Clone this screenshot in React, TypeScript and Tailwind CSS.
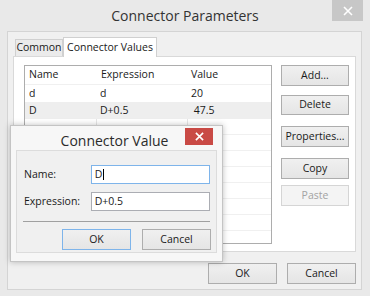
const rows = [
  { name: "d", expr: "d", value: "20" },
  { name: "D", expr: "D+0.5", value: "\u00a047.5" },
];

function Btn({
  label,
  className = "",
  disabled = false,
  primary = false,
}: {
  label: string;
  className?: string;
  disabled?: boolean;
  primary?: boolean;
}) {
  const look = disabled
    ? "border-[#d5d5d5] bg-[#f4f4f4] text-[#a3a3a3]"
    : primary
      ? "border-[#7eb4ea] bg-gradient-to-b from-[#f0f0f0] to-[#e5e5e5] text-[#1a1a1a]"
      : "border-[#adadad] bg-gradient-to-b from-[#f0f0f0] to-[#e5e5e5] text-[#1a1a1a]";
  return (
    <div className={`flex items-center justify-center border text-[10.5px] ${look} ${className}`}>
      {label}
    </div>
  );
}

export default function App() {
  return (
    <div className="relative flex h-[296px] w-[370px] flex-col overflow-hidden bg-[#e9e9e9] font-['Open_Sans',sans-serif] text-[#1a1a1a]">
      {/* title bar */}
      <div className="relative flex h-[31px] shrink-0 items-center justify-center">
        <span className="text-[14px] text-[#333]">Connector Parameters</span>
        <div className="absolute right-[7px] top-0 flex h-[21px] w-[31px] items-center justify-center bg-[#c7c7c7]">
          <svg width="10" height="10" viewBox="0 0 10 10">
            <path d="M1 1L9 9M9 1L1 9" stroke="#fff" strokeWidth="1.6" />
          </svg>
        </div>
      </div>

      {/* client */}
      <div className="ml-[7px] mr-[8px] flex h-[259px] flex-col border border-[#d4d4d4] bg-[#f0f0f0] px-[5px] pt-[5px]">
        {/* tabs */}
        <div className="flex h-[19px] items-end pl-[2px]">
          <div className="flex h-[17px] w-[48px] items-center justify-center border border-b-0 border-[#d0d0d0] bg-[#ebebeb] text-[10.5px]">
            Common
          </div>
          <div className="relative -mb-px flex h-[20px] w-[94px] items-center justify-center border border-b-0 border-[#d0d0d0] bg-white text-[10.5px]">
            Connector Values
          </div>
        </div>
        <div className="flex h-[196px] gap-[9px] border border-[#d9d9d9] bg-white pl-[10px] pt-[8px]">
          {/* list */}
          <div className="h-[179px] w-[248px] overflow-hidden border border-[#adadad] text-[10.5px]">
            <div className="grid h-[19px] grid-cols-[72px_91px_1fr] items-center border-b border-[#f0f0f0]">
              <span className="pl-[4px]">Name</span>
              <span className="border-l border-white pl-[3px]">Expression</span>
              <span className="pl-[3px]">Value</span>
            </div>
            {rows.map((r, i) => (
              <div
                key={r.name}
                className={`grid h-[17px] grid-cols-[72px_91px_1fr] items-center ${i === 1 ? "bg-[#eeeeee]" : ""}`}
              >
                <span className="pl-[4px]">{r.name}</span>
                <span className="pl-[3px]">{r.expr}</span>
                <span className="pl-[3px]">{r.value}</span>
              </div>
            ))}
            {Array.from({ length: 8 }).map((_, i) => (
              <div
                key={i}
                className="grid h-[16px] grid-cols-[72px_91px_1fr] border-b border-[#f0f0f0]"
              >
                <span className="border-r border-[#e6e6e6]" />
                <span className="border-r border-[#e6e6e6]" />
                <span />
              </div>
            ))}
          </div>

          {/* side buttons */}
          <div className="flex w-[68px] flex-col">
            <Btn label="Add..." className="h-[21px]" />
            <Btn label="Delete" className="mt-[9px] h-[20px]" />
            <Btn label="Properties..." className="mt-[11px] h-[21px]" />
            <Btn label="Copy" className="mt-[11px] h-[21px]" />
            <Btn label="Paste" className="mt-[6px] h-[21px]" disabled />
          </div>
        </div>

        {/* bottom buttons */}
        <div className="mt-[11px] flex justify-end gap-[10px]">
          <Btn label="OK" className="h-[21px] w-[69px]" />
          <Btn label="Cancel" className="h-[21px] w-[69px]" />
        </div>
      </div>

      {/* nested dialog */}
      <div className="absolute left-[10px] top-[125px] flex h-[137px] w-[213px] flex-col border border-[#c4c4c4] bg-[#f7f7f7] px-[5px] pb-[8px] shadow-[0_0_6px_rgba(0,0,0,0.25)]">
        <div className="relative flex h-[24px] shrink-0 items-center justify-center">
          <span className="pr-[4px] pt-[4px] text-[14px] text-[#2b2b2b]">Connector Value</span>
          <div className="absolute right-[4px] top-[2px] flex h-[17px] w-[28px] items-center justify-center bg-[#c94a45]">
            <svg width="9" height="9" viewBox="0 0 10 10">
              <path d="M1 1L9 9M9 1L1 9" stroke="#fff" strokeWidth="1.8" />
            </svg>
          </div>
        </div>
        <div className="flex flex-1 flex-col border border-[#dcdcdc] bg-[#f0f0f0] px-[6px] pt-[14px] text-[10.5px]">
          <div className="flex h-[19px] items-center">
            <span className="w-[68px] pl-[1px]">Name:</span>
            <div className="flex h-[19px] w-[120px] items-center border border-[#7eb4ea] bg-white pl-[3px]">
              D<span className="ml-px inline-block h-[11px] w-px bg-black" />
            </div>
          </div>
          <div className="mt-[8px] flex h-[19px] items-center">
            <span className="w-[68px] pl-[1px]">Expression:</span>
            <div className="flex h-[19px] w-[120px] items-center border border-[#abadb3] bg-white pl-[3px]">
              D+0.5
            </div>
          </div>
          <div className="mt-[10px] h-px w-[187px] bg-[#a0a0a0]" />
          <div className="mt-[7px] flex w-[188px] justify-end gap-[11px]">
            <Btn label="OK" className="h-[21px] w-[69px]" primary />
            <Btn label="Cancel" className="h-[21px] w-[69px]" />
          </div>
        </div>
      </div>
    </div>
  );
}
